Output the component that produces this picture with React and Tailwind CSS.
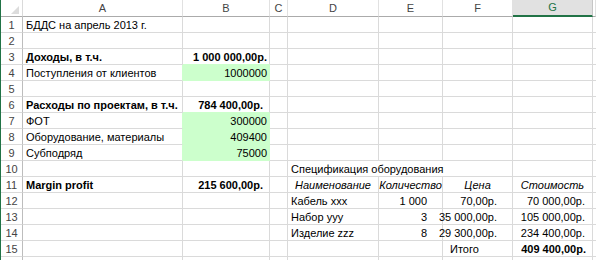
import React from 'react';

const GRID = 'grid grid-cols-[22px_160px_87px_18px_91px_64px_70px_80px_1fr]';
const COLS = ['A', 'B', 'C', 'D', 'E', 'F', 'G', 'H'];

// cell flags: b bold, i italic, al align, fill green, gr green right border, gb green bottom border, pad override
const ROWS = [
  { A: { t: 'БДДС на апрель 2013 г.' } },
  {},
  {
    A: { t: 'Доходы, в т.ч.', b: true },
    B: { t: '1 000 000,00р.', b: true, al: 'r', gb: true, pad: 'pr-[2px]' },
  },
  {
    A: { t: 'Поступления от клиентов', gr: true },
    B: { t: '1000000', al: 'r', fill: true, pad: 'pr-[2px]' },
  },
  {},
  {
    A: { t: 'Расходы по проектам, в т.ч.', b: true },
    B: { t: '784 400,00р.', b: true, al: 'r', gb: true, pad: 'pr-[6px]' },
  },
  { A: { t: 'ФОТ', gr: true }, B: { t: '300000', al: 'r', fill: true, pad: 'pr-[2px]' } },
  { A: { t: 'Оборудование, материалы', gr: true }, B: { t: '409400', al: 'r', fill: true, pad: 'pr-[2px]' } },
  { A: { t: 'Субподряд', gr: true }, B: { t: '75000', al: 'r', fill: true, pad: 'pr-[2px]' } },
  { D: { t: 'Спецификация оборудования', span: true } },
  {
    A: { t: 'Margin profit', b: true },
    B: { t: '215 600,00р.', b: true, al: 'r', pad: 'pr-[6px]' },
    D: { t: 'Наименование', i: true, al: 'c' },
    E: { t: 'Количество', i: true, al: 'c' },
    F: { t: 'Цена', i: true, al: 'c' },
    G: { t: 'Стоимость', i: true, al: 'c' },
  },
  {
    D: { t: 'Кабель xxx' },
    E: { t: '1 000', al: 'r', pad: 'pr-[15px]' },
    F: { t: '70,00р.', al: 'r', pad: 'pr-[15px]' },
    G: { t: '70 000,00р.', al: 'r', pad: 'pr-[7px]' },
  },
  {
    D: { t: 'Набор yyy' },
    E: { t: '3', al: 'r', pad: 'pr-[15px]' },
    F: { t: '35 000,00р.', al: 'r', pad: 'pr-[15px]' },
    G: { t: '105 000,00р.', al: 'r', pad: 'pr-[7px]' },
  },
  {
    D: { t: 'Изделие zzz' },
    E: { t: '8', al: 'r', pad: 'pr-[15px]' },
    F: { t: '29 300,00р.', al: 'r', pad: 'pr-[15px]' },
    G: { t: '234 400,00р.', al: 'r', pad: 'pr-[7px]' },
  },
  {
    F: { t: 'Итого', pad: 'pl-[7px]' },
    G: { t: '409 400,00р.', b: true, al: 'r', pad: 'pr-[6px]' },
  },
  {},
];

const Cell = ({ c = {} }) => {
  const align = c.al === 'r' ? 'justify-end' : c.al === 'c' ? 'justify-center' : 'justify-start';
  const pad = c.pad || (c.al === 'r' ? 'pr-[3px]' : c.al === 'c' ? '' : 'pl-[3px]');
  return (
    <div
      className={`flex items-end leading-[13px] overflow-visible whitespace-nowrap border-r border-b ${align} ${pad} ${
        c.fill ? 'bg-[#ccffcc] border-[#ccffcc]' : 'bg-white border-[#dadada]'
      } ${c.gr ? 'border-r-[#ccffcc]' : ''} ${c.gb ? 'border-b-[#ccffcc]' : ''} ${c.b ? 'font-bold' : ''} ${
        c.i ? 'italic' : ''
      } ${c.span ? 'col-span-3' : ''}`}
    >
      {c.t}
    </div>
  );
};

const Row = ({ n, data }) => {
  const cells = [];
  let skip = 0;
  COLS.forEach((col) => {
    if (skip > 0) {
      skip -= 1;
      return;
    }
    const c = data[col];
    if (c?.span) skip = 2;
    cells.push(<Cell key={col} c={c} />);
  });
  return (
    <div className={`${GRID} h-4`}>
      <div className="flex items-end justify-center leading-[13px] border-r border-r-[#bdbdbd] border-b border-b-[#dadada] text-[#444]">
        {n <= 15 ? n : ''}
      </div>
      {cells}
    </div>
  );
};

export default function App() {
  return (
    <div className="w-[596px] h-[260px] overflow-hidden bg-white border-l border-[#217346] font-['Liberation_Sans',sans-serif] text-[11px] leading-[15px] text-black">
      <div className={`${GRID} h-[17px]`}>
        <div className="flex items-end justify-end pr-[3px] pb-[2px] border-r border-r-[#dadada] border-b border-b-[#ababab]">
          <svg width="8" height="8" viewBox="0 0 8 8">
            <polygon points="8,0 8,8 0,8" fill="#dcdcdc" />
          </svg>
        </div>
        {COLS.map((col) =>
          col === 'G' ? (
            <div
              key={col}
              className="flex items-center justify-center bg-[#e1e1e1] text-[#217346] border-r border-r-[#c6c6c6] border-b-2 border-b-[#217346]"
            >
              {col}
            </div>
          ) : (
            <div
              key={col}
              className="flex items-center justify-center text-[#444] border-r border-r-[#e1e1e1] border-b border-b-[#ababab]"
            >
              {col === 'H' ? '' : col}
            </div>
          )
        )}
      </div>
      {ROWS.map((r, i) => (
        <Row key={i} n={i + 1} data={r} />
      ))}
    </div>
  );
}
